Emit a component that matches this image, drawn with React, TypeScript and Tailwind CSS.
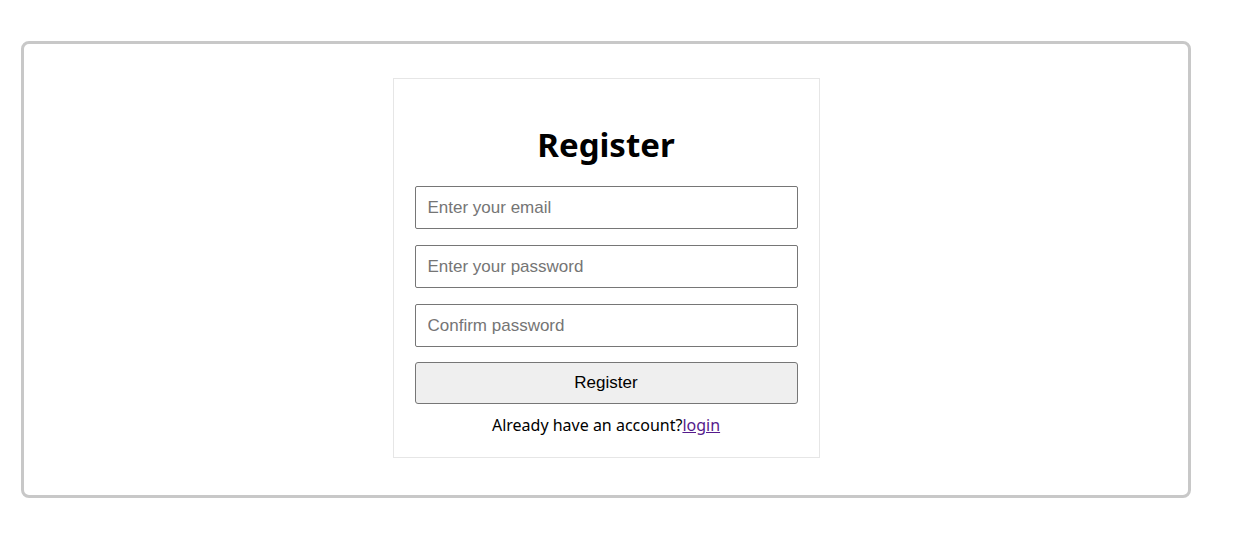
const fieldClass =
  "w-full h-[43px] border border-[#767676] rounded-[2px] px-3 text-[17px] text-black placeholder:text-[#757575] outline-none bg-white";

const App = () => {
  return (
    <div className="min-h-[536px] bg-white pt-[41px] pl-[21px] font-['Liberation_Sans',Arial,sans-serif]">
      <div className="w-[1170px] h-[457px] border-[3px] border-[#c8c8c8] rounded-[8px] flex justify-center pt-[34px]">
        <div className="w-[427px] h-[380px] border border-[#e6e6e6] px-[21px] pt-[46px] flex flex-col items-stretch">
          <h1 className="text-center text-[33px] leading-[39px] font-bold text-black font-['Noto_Sans','Open_Sans',sans-serif]">
            Register
          </h1>
          <form className="mt-[22px] flex flex-col gap-[16px]" onSubmit={(e) => e.preventDefault()}>
            <input type="email" placeholder="Enter your email" className={fieldClass} />
            <input type="password" placeholder="Enter your password" className={fieldClass} />
            <input type="password" placeholder="Confirm password" className={fieldClass} />
            <button
              type="submit"
              className="w-full h-[42px] border border-[#767676] rounded-[3px] bg-[#efefef] text-[17px] text-black -mt-[1px]"
            >
              Register
            </button>
          </form>
          <p className="mt-[9px] text-center text-[16px] leading-[24px] text-black font-['Noto_Sans','Open_Sans',sans-serif]">
            Already have an account?
            <a href="#" className="text-[#551a8b] underline">
              login
            </a>
          </p>
        </div>
      </div>
    </div>
  );
};

export default App;
